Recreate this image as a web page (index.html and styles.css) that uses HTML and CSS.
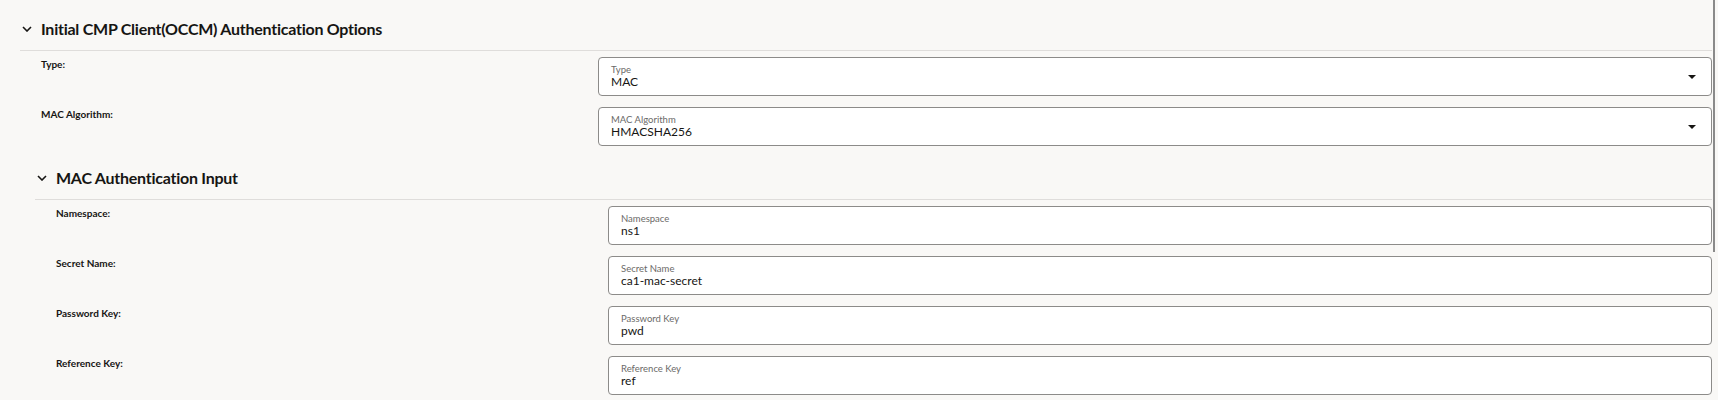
FILE: index.html
```html
<!DOCTYPE html>
<html lang="en">
<head>
<meta charset="utf-8">
<title>CMP Authentication Options</title>
<link rel="stylesheet" href="styles.css">
</head>
<body>
<div class="page">
  <section class="sec sec-1">
    <div class="sec-head">
      <svg class="chev" width="10" height="6" viewBox="0 0 10 6"><path d="M1 1 L5 5 L9 1" fill="none" stroke="#161513" stroke-width="1.6"/></svg>
      <h2 class="sec-title">Initial CMP Client(OCCM) Authentication Options</h2>
    </div>
    <div class="rows">
      <div class="row">
        <div class="row-label">Type:</div>
        <div class="field">
          <div class="field-text"><span class="fl">Type</span><span class="fv">MAC</span></div>
          <svg class="caret" width="8" height="4" viewBox="0 0 8 4"><path d="M0 0 H8 L4 4 Z" fill="#161513"/></svg>
        </div>
      </div>
      <div class="row">
        <div class="row-label">MAC Algorithm:</div>
        <div class="field">
          <div class="field-text"><span class="fl">MAC Algorithm</span><span class="fv">HMACSHA256</span></div>
          <svg class="caret" width="8" height="4" viewBox="0 0 8 4"><path d="M0 0 H8 L4 4 Z" fill="#161513"/></svg>
        </div>
      </div>
    </div>
  </section>
  <section class="sec sec-2">
    <div class="sec-head">
      <svg class="chev" width="10" height="6" viewBox="0 0 10 6"><path d="M1 1 L5 5 L9 1" fill="none" stroke="#161513" stroke-width="1.6"/></svg>
      <h2 class="sec-title">MAC Authentication Input</h2>
    </div>
    <div class="rows">
      <div class="row">
        <div class="row-label">Namespace:</div>
        <div class="field"><div class="field-text"><span class="fl">Namespace</span><span class="fv">ns1</span></div></div>
      </div>
      <div class="row">
        <div class="row-label">Secret Name:</div>
        <div class="field"><div class="field-text"><span class="fl">Secret Name</span><span class="fv">ca1-mac-secret</span></div></div>
      </div>
      <div class="row">
        <div class="row-label">Password Key:</div>
        <div class="field"><div class="field-text"><span class="fl">Password Key</span><span class="fv">pwd</span></div></div>
      </div>
      <div class="row">
        <div class="row-label">Reference Key:</div>
        <div class="field"><div class="field-text"><span class="fl">Reference Key</span><span class="fv">ref</span></div></div>
      </div>
    </div>
  </section>
  <div class="scroll-thumb"></div>
</div>
</body>
</html>
```

FILE: styles.css
```css
html, body {
  margin: 0;
  padding: 0;
  background: #f9f8f6;
  overflow: hidden;
}
body {
  font-family: Lato, "Liberation Sans", sans-serif;
  color: #161513;
}
.page {
  position: relative;
  width: 1718px;
  height: 400px;
}
.sec-1 {
  margin-left: 20px;
  width: 1692px;
}
.sec-2 {
  margin-left: 35px;
  width: 1677px;
}
.sec-head {
  box-sizing: border-box;
  height: 51px;
  padding: 8px 0 0 2px;
  border-bottom: 1px solid #dfdddb;
  display: flex;
  align-items: center;
  gap: 9px;
}
.chev {
  display: block;
  flex: none;
}
.sec-title {
  margin: 0;
  font-size: 16px;
  line-height: 20px;
  letter-spacing: -0.25px;
  font-weight: 700;
  color: #161513;
}
.rows {
  display: flex;
  flex-direction: column;
  gap: 11px;
  padding: 6px 0 3px 21px;
}
.row {
  display: grid;
  grid-template-columns: 1fr 2fr;
}
.row-label {
  font-size: 10px;
  line-height: 14px;
  font-weight: 700;
  color: #161513;
}
.field {
  box-sizing: border-box;
  height: 39px;
  border: 1px solid #8c8b89;
  border-radius: 4px;
  background: #ffffff;
  padding: 0 15px 0 12px;
  display: flex;
  align-items: center;
}
.field-text {
  flex: 1;
  align-self: flex-start;
  padding-top: 7px;
}
.fl {
  display: block;
  font-size: 9.5px;
  line-height: 10px;
  color: #6b6a68;
}
.fv {
  display: block;
  font-size: 12px;
  line-height: 13px;
  color: #161513;
}
.caret {
  display: block;
  flex: none;
}
.scroll-thumb {
  position: absolute;
  left: 1713px;
  top: 0;
  width: 2px;
  height: 252px;
  background: #8a8a8a;
}
```
